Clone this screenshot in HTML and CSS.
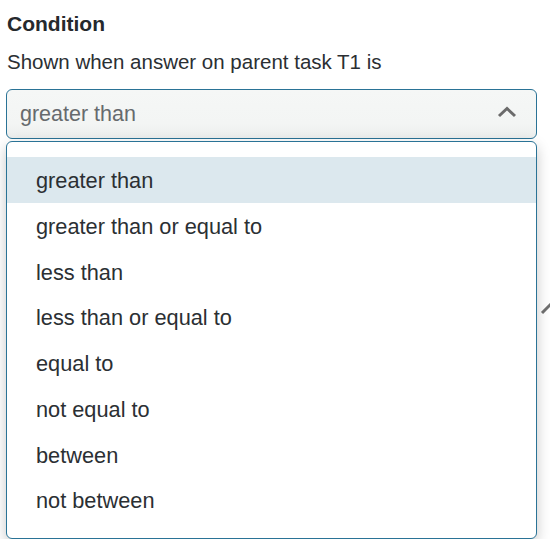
FILE: index.html
```html
<!DOCTYPE html>
<html>
<head>
<meta charset="utf-8">
<link rel="stylesheet" href="styles.css">
</head>
<body>
<div class="page">
  <h2 class="title">Condition</h2>
  <p class="desc">Shown when answer on parent task T1 is</p>
  <div class="field">
    <div class="select">
      <span class="value">greater than</span>
      <svg class="chev" width="20" height="12" viewBox="0 0 20 12"><path d="M2 10 L10 2.5 L18 10" fill="none" stroke="#6b6b6b" stroke-width="3"/></svg>
    </div>
    <div class="menu">
      <div class="item active">greater than</div>
      <div class="item">greater than or equal to</div>
      <div class="item">less than</div>
      <div class="item">less than or equal to</div>
      <div class="item">equal to</div>
      <div class="item">not equal to</div>
      <div class="item">between</div>
      <div class="item">not between</div>
    </div>
    <svg class="under" width="24" height="24" viewBox="0 0 24 24"><path d="M2 22 L11 13" fill="none" stroke="#707070" stroke-width="3"/></svg>
  </div>
</div>
</body>
</html>
```
FILE: styles.css
```css
html, body {
  margin: 0;
  padding: 0;
  background: #ffffff;
}
.page {
  padding: 12px 13px 0 6px;
  font-family: "Liberation Sans", Arial, Helvetica, sans-serif;
  color: #2b2f33;
}
.title {
  margin: 0 0 0 1px;
  font-size: 21px;
  line-height: 24px;
  font-weight: bold;
  color: #25292d;
}
.desc {
  margin: 14px 0 0 1px;
  font-size: 20.5px;
  line-height: 24px;
  color: #2b2f33;
}
.field {
  position: relative;
  margin-top: 15px;
}
.select {
  height: 48px;
  border: 1px solid #2a7396;
  border-radius: 6px;
  background: linear-gradient(#f5f7f6 0%, #f3f5f4 70%, #eceeed 100%);
  display: flex;
  align-items: center;
  justify-content: space-between;
  padding: 0 19px 0 13px;
  font-size: 21.5px;
  color: #666a6d;
}
.chev {
  margin-top: -4px;
}
.menu {
  position: relative;
  z-index: 1;
  margin-top: 2px;
  padding: 15px 0 15px 0;
  background: #ffffff;
  border: 1px solid #2a7396;
  border-radius: 6px;
  box-shadow: 0 5px 14px rgba(0, 0, 0, 0.22);
}
.item {
  box-sizing: border-box;
  height: 45.75px;
  padding-top: 2px;
  line-height: 43.75px;
  padding-left: 29px;
  font-size: 21.75px;
  color: #2b2f33;
}
.item.active {
  background: #dce8ee;
}
.under {
  position: absolute;
  left: 534px;
  top: 202px;
  z-index: 0;
}
```
